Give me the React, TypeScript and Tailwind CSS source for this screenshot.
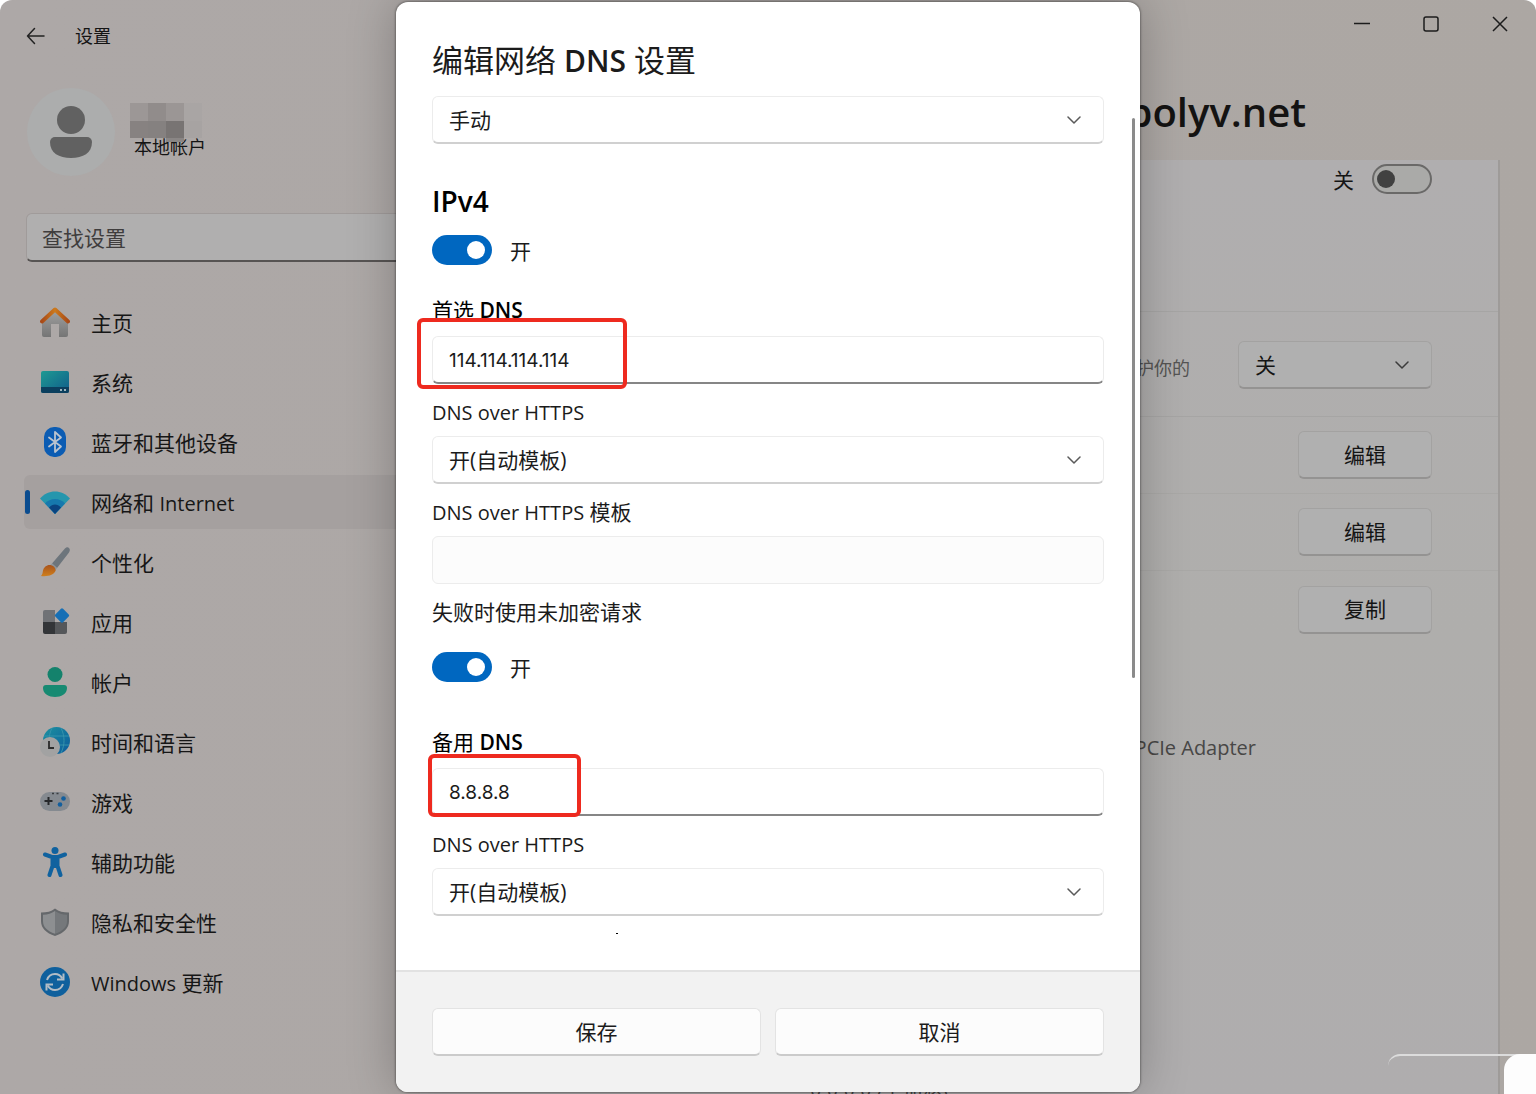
import { useState } from "react";
import type { ReactNode } from "react";

const fieldBase =
  "h-12 w-full appearance-none rounded-md border border-[#ececec] bg-white px-4 pt-0.5 text-[#1b1b1b] outline-none disabled:bg-[#fcfcfc]";

const HomeIcon = () => (
  <svg viewBox="0 0 30 30" className="size-[30px]">
    <defs>
      <linearGradient id="home-wall" x1="0" y1="0" x2="0" y2="1">
        <stop offset="0" stopColor="#a3a3a3" />
        <stop offset="1" stopColor="#757575" />
      </linearGradient>
      <linearGradient id="home-roof" x1="0" y1="0" x2="1" y2="0">
        <stop offset="0" stopColor="#a84a18" />
        <stop offset="0.5" stopColor="#cd7a1c" />
        <stop offset="1" stopColor="#a84a18" />
      </linearGradient>
    </defs>
    <path d="M2 14 15 2l13 12v14a2 2 0 0 1-2 2h-7V17h-8v13H4a2 2 0 0 1-2-2z" fill="url(#home-wall)" />
    <path d="M2 14.500 15 2.500 28 14.500" fill="none" stroke="url(#home-roof)" strokeWidth="4" strokeLinecap="round" strokeLinejoin="round" />
  </svg>
);

const SystemIcon = () => (
  <svg viewBox="0 0 30 30" className="size-[30px]">
    <defs>
      <linearGradient id="sys-screen" x1="0" y1="0" x2="1" y2="1">
        <stop offset="0" stopColor="#1f9a93" />
        <stop offset="1" stopColor="#0f5c8a" />
      </linearGradient>
    </defs>
    <rect x="1" y="4" width="28" height="22" rx="2" fill="url(#sys-screen)" />
    <path d="M1 20h28v4a2 2 0 0 1-2 2H3a2 2 0 0 1-2-2z" fill="#0b3f5e" />
    <rect x="20" y="22" width="2" height="2" fill="#9fb6bf" />
    <rect x="24" y="22" width="2" height="2" fill="#9fb6bf" />
  </svg>
);

const BluetoothIcon = () => (
  <svg viewBox="0 0 30 30" className="size-[30px]">
    <rect x="4" y="0" width="22" height="30" rx="10" fill="#0b5cb3" />
    <path d="m9 10.500 12 9-6 5.500V5l6 5.500-12 9" fill="none" stroke="#b9c3cf" strokeWidth="1.800" strokeLinejoin="round" strokeLinecap="round" />
  </svg>
);

const WifiIcon = () => (
  <svg viewBox="0 0 30 30" className="size-[30px]">
    <path d="M0 11.500C8 2 22 2 30 11.500L15 27z" fill="#2596ad" />
    <path d="M5 16.500c5-6 15-6 20 0L15 27z" fill="#1678ad" />
    <path d="M9 20.500c3.500-4 8.500-4 12 0L15 27z" fill="#0a4380" />
  </svg>
);

const BrushIcon = () => (
  <svg viewBox="0 0 30 30" className="size-[30px]">
    <defs>
      <linearGradient id="brush-tip" x1="0" y1="0" x2="0" y2="1">
        <stop offset="0" stopColor="#a8531c" />
        <stop offset="1" stopColor="#cf7f1d" />
      </linearGradient>
    </defs>
    <path d="M29 1c1.300 1.300 1 3-.2 4.800L17 21l-5-4.500L24.500 2C26 .3 27.800-.2 29 1z" fill="#6d757c" />
    <path d="M12 16.500 17 21l-1.500 2.500-6-5z" fill="#8d959b" />
    <path d="M10.500 18c3 .5 5 2.500 5.200 5.500C14 28 8 29.800 1 29c1.500-1.500 1.500-3 2-5.500.8-3.500 4-6 7.500-5.500z" fill="url(#brush-tip)" />
  </svg>
);

const AppsIcon = () => (
  <svg viewBox="0 0 30 30" className="size-[30px]">
    <path d="M5 3h10v12H3V5a2 2 0 0 1 2-2z" fill="#707276" />
    <path d="M3 15h12v12H5a2 2 0 0 1-2-2z" fill="#333538" />
    <path d="M15 15h12v10a2 2 0 0 1-2 2H15z" fill="#55575a" />
    <rect x="16.500" y="3" width="11" height="11" rx="1.500" transform="rotate(45 22 8.500)" fill="#166fb5" />
  </svg>
);

const AccountIcon = () => (
  <svg viewBox="0 0 30 30" className="size-[30px]">
    <circle cx="15" cy="7.500" r="7.500" fill="#14826c" />
    <path d="M6 18h18a3 3 0 0 1 3 3c0 6-6 9-12 9S3 27 3 21a3 3 0 0 1 3-3z" fill="#178a72" />
  </svg>
);

const TimeIcon = () => (
  <svg viewBox="0 0 30 30" className="size-[30px]">
    <defs>
      <linearGradient id="globe" x1="0" y1="0" x2="1" y2="1">
        <stop offset="0" stopColor="#1c92a0" />
        <stop offset="1" stopColor="#0d5a9c" />
      </linearGradient>
    </defs>
    <circle cx="16.500" cy="13.500" r="13.500" fill="url(#globe)" />
    <path d="M4 9h25M4 18h25M12 1c-4 8-4 17 0 25M21 1c4 8 4 17 0 25" fill="none" stroke="#3592ab" strokeWidth="1" />
    <circle cx="10" cy="20" r="10" fill="#a2a2a2" />
    <path d="M9 14v7h5" fill="none" stroke="#2b2b2b" strokeWidth="1.800" />
  </svg>
);

const GameIcon = () => (
  <svg viewBox="0 0 30 30" className="size-[30px]">
    <rect x="0" y="5" width="30" height="19" rx="9.500" fill="#858a90" />
    <path d="M8.500 10v8M4.500 14h8" stroke="#26282b" strokeWidth="2" />
    <circle cx="23.500" cy="11.500" r="2.300" fill="#135f9e" />
    <circle cx="20" cy="17.500" r="2.300" fill="#135f9e" />
    <path d="M12 6.500h2M16.500 6.500h2" stroke="#3a3d40" strokeWidth="1.500" />
  </svg>
);

const AccessibilityIcon = () => (
  <svg viewBox="0 0 30 30" className="size-[30px]">
    <circle cx="15" cy="3.500" r="3.500" fill="#10629f" />
    <path d="M5 7.500 12 10h6l7-2.500M15 11v8M12.500 12v7L9.500 28M17.500 12v7l3 9" fill="none" stroke="#10629f" strokeWidth="4" strokeLinecap="round" strokeLinejoin="round" />
  </svg>
);

const ShieldIcon = () => (
  <svg viewBox="0 0 30 30" className="size-[30px]">
    <path d="M15 1.500C19 4.500 23 5.500 29 5.500V14c0 7-5 12-14 15C6 26 1 21 1 14V5.500c6 0 10-1 14-4z" fill="#65686b" />
    <path d="M15 4c-3.500 2.500-7 3.500-12 3.700V14c0 6 4 10 12 12.800z" fill="#8d8f91" />
    <path d="M15 4c3.500 2.500 7 3.500 12 3.700V14c0 6-4 10-12 12.800z" fill="#75787b" />
  </svg>
);

const UpdateIcon = () => (
  <svg viewBox="0 0 30 30" className="size-[30px]">
    <circle cx="15" cy="15" r="15" fill="#0f609d" />
    <path d="M7 13c1.500-4.500 4.500-6 8-6 3.500 0 5.800 1.800 7.300 4.500M23 17c-1.500 4.500-4.500 6-8 6-3.500 0-5.800-1.800-7.300-4.500" fill="none" stroke="#b3bdc6" strokeWidth="2" />
    <path d="M23.500 6.500v6H17M6.500 23.500v-6H13" fill="none" stroke="#b3bdc6" strokeWidth="2" />
  </svg>
);

// Latin words run a touch smaller than the Chinese text beside them
const Latin = ({ children }: { children: ReactNode }) => <span className="text-xl">{children}</span>;

const navItems: { id: string; label: ReactNode; icon: ReactNode; active?: boolean }[] = [
  { id: "home", label: "主页", icon: <HomeIcon /> },
  { id: "system", label: "系统", icon: <SystemIcon /> },
  { id: "bluetooth", label: "蓝牙和其他设备", icon: <BluetoothIcon /> },
  { id: "network", label: <>网络和 <Latin>Internet</Latin></>, icon: <WifiIcon />, active: true },
  { id: "personalization", label: "个性化", icon: <BrushIcon /> },
  { id: "apps", label: "应用", icon: <AppsIcon /> },
  { id: "accounts", label: "帐户", icon: <AccountIcon /> },
  { id: "time", label: "时间和语言", icon: <TimeIcon /> },
  { id: "gaming", label: "游戏", icon: <GameIcon /> },
  { id: "accessibility", label: "辅助功能", icon: <AccessibilityIcon /> },
  { id: "privacy", label: "隐私和安全性", icon: <ShieldIcon /> },
  { id: "update", label: <><Latin>Windows</Latin> 更新</>, icon: <UpdateIcon /> },
];

const Chevron = ({ className }: { className: string }) => (
  <svg viewBox="0 0 14 8" className={`pointer-events-none absolute top-5 h-2 w-3.5 ${className}`}>
    <path d="m1 1 6 6 6-6" fill="none" stroke="currentColor" strokeWidth="1.500" strokeLinecap="round" strokeLinejoin="round" />
  </svg>
);

const Select = ({ id, label, options }: { id: string; label?: string; options: string[] }) => (
  <div className="relative">
    <select id={id} aria-label={label} className={`${fieldBase} border-b-2 border-b-[#d0d0d0]`}>
      {options.map((option) => (
        <option key={option}>{option}</option>
      ))}
    </select>
    <Chevron className="right-[23px] text-[#5a5a5a]" />
  </div>
);

const Toggle = ({ label }: { label: string }) => {
  const [on, setOn] = useState(true);
  return (
    <label className="flex h-[30px] items-center gap-[18px]">
      <input
        type="checkbox"
        role="switch"
        aria-label={label}
        checked={on}
        onChange={() => setOn(!on)}
        className="peer sr-only"
      />
      <span className="flex h-[30px] w-[60px] items-center justify-end rounded-full bg-[#0067c0] px-[7px] peer-not-checked:justify-start peer-not-checked:bg-[#8a8a8a]">
        <span className="size-[18px] rounded-full bg-white" />
      </span>
      <span className="pt-1">{on ? "开" : "关"}</span>
    </label>
  );
};

const FieldLabel = ({ htmlFor, children }: { htmlFor: string; children: ReactNode }) => (
  <label htmlFor={htmlFor} className="mt-3.5 mb-2.5 block h-7 leading-7">
    {children}
  </label>
);

const Sidebar = () => (
  <aside className="w-[420px] shrink-0 pl-6">
    <div className="flex h-[72px] items-center">
      <button aria-label="返回" className="flex w-[51px] pl-0.5 text-[#222]">
        <svg viewBox="0 0 20 18" className="h-[18px] w-5">
          <path d="M18 9H1.500M8.500 1.500 1.500 9l7 7.500" fill="none" stroke="currentColor" strokeWidth="1.500" strokeLinecap="round" strokeLinejoin="round" />
        </svg>
      </button>
      <span className="text-lg text-[#141414]">设置</span>
    </div>

    <div className="mt-4 flex items-start gap-[15px] pl-[3px]">
      <div className="flex size-[88px] items-center justify-center rounded-full bg-[#acadad]">
        <svg viewBox="0 0 42 52" className="h-[52px] w-[42px] fill-[#616161]">
          <circle cx="21" cy="14" r="14" />
          <path d="M5 31h32a5 5 0 0 1 5 5c0 11-9 16-21 16S0 47 0 36a5 5 0 0 1 5-5z" />
        </svg>
      </div>
      <div className="relative pt-[45px]">
        <p className="pl-1 text-lg text-[#141414]">本地帐户</p>
        <div aria-hidden className="absolute top-[15px] left-0 grid w-[72px] grid-cols-4">
          <span className="h-[18px] bg-[#9c9796]" />
          <span className="h-[18px] bg-[#918c8b]" />
          <span className="h-[18px] bg-[#9b9695]" />
          <span className="h-[18px] bg-[#a9a5a4]" />
          <span className="h-[17px] bg-[#878281]" />
          <span className="h-[17px] bg-[#858180]" />
          <span className="h-[17px] bg-[#787473]" />
          <span className="h-[17px] bg-[#a7a3a2]" />
          <span className="col-start-3 h-1 bg-[#8a8685]" />
        </div>
      </div>
    </div>

    <input
      type="search"
      aria-label="查找设置"
      placeholder="查找设置"
      className="mt-[37px] ml-0.5 block h-[49px] w-full rounded-md border border-b-2 border-[#a09b9a] border-b-[#575453] bg-[#b0afaf] px-[15px] pt-0.5 text-[21px] placeholder:text-[#3f3d3d]"
    />

    <nav className="mt-[33px]">
      <ul className="flex flex-col gap-1.5">
        {navItems.map((item) => (
          <li key={item.id}>
            <a
              href="#"
              aria-current={item.active ? "page" : undefined}
              className={`relative flex h-[54px] items-center gap-[21px] rounded-md pl-4 text-[21px] text-[#161616] ${item.active ? "bg-[#a5a09f]" : ""}`}
            >
              {item.active && <span className="absolute left-px h-6 w-[5px] rounded-full bg-[#0a4c8f]" />}
              {item.icon}
              <span className="pt-[3px]">{item.label}</span>
            </a>
          </li>
        ))}
      </ul>
    </nav>
  </aside>
);

const CardButton = ({ children }: { children: ReactNode }) => (
  <button className="h-12 w-[134px] rounded-md border border-b-2 border-[#a3a2a1] border-b-[#949392] bg-[#b0b0b0] pt-0.5 text-[#141414]">
    {children}
  </button>
);

const MainPane = () => (
  <main className="flex min-w-0 flex-1 flex-col text-[21px]">
    <div className="flex h-12 items-center justify-end gap-[53px] pr-7 text-[#1c1c1c]">
      <button aria-label="最小化">
        <svg viewBox="0 0 16 16" className="size-4">
          <path d="M0 7.500h16" stroke="currentColor" strokeWidth="1.500" />
        </svg>
      </button>
      <button aria-label="最大化">
        <svg viewBox="0 0 16 16" className="size-4">
          <rect x="1" y="1" width="14" height="14" rx="2" fill="none" stroke="currentColor" strokeWidth="1.500" />
        </svg>
      </button>
      <button aria-label="关闭">
        <svg viewBox="0 0 16 16" className="size-4">
          <path d="m1 1 14 14M15 1 1 15" stroke="currentColor" strokeWidth="1.500" />
        </svg>
      </button>
    </div>

    <h1 className="flex h-28 items-center justify-end pt-4 pr-[230px] text-[40px] leading-none font-semibold text-[#141312]">
      polyv.net
    </h1>

    <div className="mr-9 flex flex-1 flex-col border-r-2 border-[#9e9b99] bg-linear-to-b from-[#b0aeaf] via-[#afaeac] to-[#afadae]">
      <div className="flex h-[152px] items-start justify-end gap-[18px] border-b border-[#a6a5a4] pt-1 pr-[66px]">
        <label htmlFor="metered" className="pt-px leading-[30px] text-[#141414]">关</label>
        <span className="relative flex">
          <input id="metered" type="checkbox" role="switch" className="h-[30px] w-[60px] appearance-none rounded-full border-2 border-[#6a6968] bg-[#aaaaa8]" />
          <span className="pointer-events-none absolute top-1.5 left-[5px] size-[18px] rounded-full bg-[#414141]" />
        </span>
      </div>
      <div className="flex h-[105px] items-center justify-end border-b border-[#a6a5a4] pt-0.5 pr-[66px]">
        <label htmlFor="limit" className="mr-12 pt-1.5 text-lg text-[#555453]">护你的</label>
        <div className="relative">
          <select id="limit" className="h-12 w-[194px] appearance-none rounded-md border border-b-2 border-[#a3a2a1] border-b-[#949392] bg-[#b0b0b0] px-4 pt-0.5 text-[#141414]">
            <option>关</option>
          </select>
          <Chevron className="right-[23px] text-[#3c3c3c]" />
        </div>
      </div>
      {["编辑", "编辑", "复制"].map((text, i) => (
        <div key={i} className="flex h-[77px] items-center justify-end border-b border-[#a9a8a6] pr-[66px] last-of-type:border-0">
          <CardButton>{text}</CardButton>
        </div>
      ))}
      <p className="mt-[86px] pr-[242px] text-right text-xl leading-7 text-[#484746]">PCIe Adapter</p>
      <p className="mt-auto ml-[390px] h-1 overflow-hidden text-xl leading-3 text-[#484746]">8.8.8.8 (未加密)</p>
    </div>
  </main>
);

const DnsDialog = () => (
  <div
    role="dialog"
    aria-modal="true"
    aria-labelledby="dialog-title"
    className="relative flex w-[744px] flex-col overflow-hidden rounded-xl bg-white text-[21px] text-[#1b1b1b] shadow-[0_0_48px_rgba(0,0,0,0.25),0_0_2px_1px_rgba(0,0,0,0.3)]"
  >
    <div className="flex-1 px-9 pt-9">
      <h1 id="dialog-title" className="h-11 text-[31px] leading-11">
        编辑网络 <span className="text-[30px] font-semibold">DNS</span> 设置
      </h1>
      <div className="mt-3.5">
        <Select id="mode" label="编辑网络 DNS 设置" options={["手动", "自动(DHCP)"]} />
      </div>

      <h2 className="mt-[37px] h-10 text-[28px] leading-10 font-semibold text-black">IPv4</h2>
      <div className="mt-3.5">
        <Toggle label="IPv4" />
      </div>

      <label htmlFor="primary" className="mt-[31px] mb-3 block h-7 leading-7 text-black">
        首选 <span className="font-semibold">DNS</span>
      </label>
      <div className="relative">
        <input id="primary" defaultValue="114.114.114.114" className={`${fieldBase} border-b-2 border-b-[#868686] font-[Inter] text-[19px]`} />
        <span className="pointer-events-none absolute -top-[18px] -left-[15px] h-[71px] w-[210px] rounded-md border-4 border-[#ee2a1f]" />
      </div>
      <FieldLabel htmlFor="primary-doh"><Latin>DNS over HTTPS</Latin></FieldLabel>
      <Select id="primary-doh" options={["开(自动模板)", "关"]} />
      <FieldLabel htmlFor="primary-template"><Latin>DNS over HTTPS</Latin> 模板</FieldLabel>
      <input id="primary-template" disabled className={fieldBase} />
      <p className="mt-3.5 mb-[26px] h-7 leading-7">失败时使用未加密请求</p>
      <Toggle label="失败时使用未加密请求" />

      <label htmlFor="secondary" className="mt-[46px] mb-3 block h-7 leading-7 text-black">
        备用 <span className="font-semibold">DNS</span>
      </label>
      <div className="relative">
        <input id="secondary" defaultValue="8.8.8.8" className={`${fieldBase} border-b-2 border-b-[#868686] font-[Inter] text-[19px]`} />
        <span className="pointer-events-none absolute -top-[14px] -left-1 h-[63px] w-[153px] rounded-md border-4 border-[#ee2a1f]" />
      </div>
      <FieldLabel htmlFor="secondary-doh"><Latin>DNS over HTTPS</Latin></FieldLabel>
      <Select id="secondary-doh" options={["开(自动模板)", "关"]} />
      <div className="mt-[17px] ml-[184px] h-px w-0.5 bg-black" />
    </div>

    <div className="flex h-[122px] gap-3.5 border-t-2 border-[#e2e2e2] bg-[#f2f2f2] px-9 pt-9">
      <button className="h-12 flex-1 rounded-md border border-b-2 border-[#e3e3e3] border-b-[#cbcbcb] bg-[#fcfcfc] pt-0.5">保存</button>
      <button className="h-12 flex-1 rounded-md border border-b-2 border-[#e3e3e3] border-b-[#cbcbcb] bg-[#fcfcfc] pt-0.5">取消</button>
    </div>
    <span className="absolute top-[116px] right-[5px] h-[560px] w-[3px] rounded-full bg-[#8b8b8b]" />
  </div>
);

export default function App() {
  return (
    <div className="relative flex min-h-screen overflow-hidden rounded-t-xl bg-linear-to-r from-[#ada8a7] to-[#aca7a3] font-['Open_Sans','Noto_Sans_CJK_SC',sans-serif]">
      <Sidebar />
      <MainPane />
      <div className="absolute right-0 bottom-0 h-10 w-[148px] rounded-tl-xl border-t-2 border-[#dcdcdc]">
        <div className="absolute right-0 -bottom-2 h-12 w-8 rounded-tl-2xl bg-[#fdfdfd]" />
      </div>
      <div className="absolute inset-0 flex justify-center py-0.5">
        <DnsDialog />
      </div>
    </div>
  );
}
